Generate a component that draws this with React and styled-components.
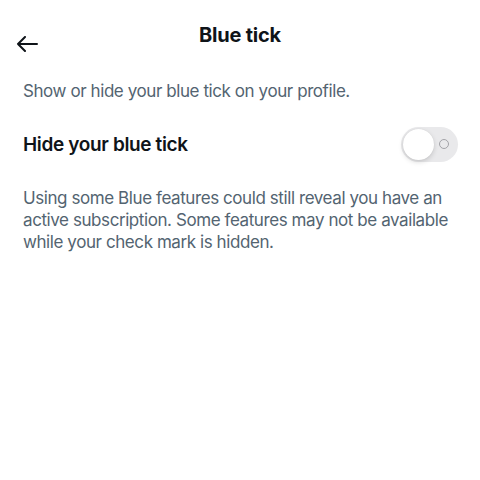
import React, { useState } from "react";
import styled, { createGlobalStyle } from "styled-components";

const GlobalStyle = createGlobalStyle`
  html, body {
    margin: 0;
    padding: 0;
    background: #ffffff;
  }
  body {
    font-family: Inter, "Liberation Sans", Arial, sans-serif;
    -webkit-font-smoothing: antialiased;
  }
`;

const Page = styled.div`
  width: 480px;
  height: 480px;
  background: #ffffff;
  color: #0f1419;
`;

const Header = styled.div`
  display: grid;
  grid-template-columns: 60px 1fr 60px;
  align-items: center;
  height: 55px;
  padding-top: 15px;
  box-sizing: border-box;
`;

const BackButton = styled.button`
  border: none;
  background: none;
  padding: 0 0 0 16px;
  display: flex;
  align-items: center;
  cursor: pointer;
  height: 20px;
  margin-top: 18px;
`;

const Title = styled.h1`
  margin: 0;
  text-align: center;
  font-size: 20px;
  font-weight: 700;
  letter-spacing: -0.2px;
  color: #0f1419;
`;

const Content = styled.div`
  padding: 0 23px;
`;

const Lead = styled.p`
  margin: 25px 0 0;
  font-size: 17px;
  line-height: 22px;
  color: #536471;
  letter-spacing: -0.42px;
`;

const SettingRow = styled.div`
  display: flex;
  align-items: center;
  justify-content: space-between;
  margin-top: 25px;
  margin-right: -1px;
`;

const SettingLabel = styled.span`
  font-size: 19px;
  font-weight: 600;
  letter-spacing: -0.35px;
  color: #0f1419;
`;

const Track = styled.button`
  position: relative;
  width: 57px;
  height: 35px;
  border-radius: 18px;
  border: none;
  padding: 0;
  background: ${(p) => (p.on ? "#1d9bf0" : "#e9e9eb")};
  cursor: pointer;
`;

const Knob = styled.span`
  position: absolute;
  top: 2px;
  left: ${(p) => (p.on ? "24px" : "2px")};
  width: 31px;
  height: 31px;
  border-radius: 50%;
  background: #ffffff;
  box-shadow: 0 2px 5px rgba(0, 0, 0, 0.15), 0 0 1px rgba(0, 0, 0, 0.1);
`;

const OffMark = styled.span`
  position: absolute;
  top: 12px;
  right: 9px;
  width: 8px;
  height: 8px;
  border-radius: 50%;
  border: 1.3px solid #a3a3a8;
`;

const Note = styled.p`
  margin: 25px 0 0;
  font-size: 17px;
  line-height: 22px;
  color: #536471;
  letter-spacing: -0.42px;
`;

const ArrowIcon = () => (
  <svg width="22" height="16" viewBox="0 0 22 16" fill="none">
    <path
      d="M21 8H2M9 1L2 8l7 7"
      stroke="#0f1419"
      strokeWidth="2"
      strokeLinecap="round"
      strokeLinejoin="round"
    />
  </svg>
);

export default function App() {
  const [hidden, setHidden] = useState(false);

  return (
    <Page>
      <GlobalStyle />
      <Header>
        <BackButton aria-label="Back">
          <ArrowIcon />
        </BackButton>
        <Title>Blue tick</Title>
        <span />
      </Header>
      <Content>
        <Lead>Show or hide your blue tick on your profile.</Lead>
        <SettingRow>
          <SettingLabel>Hide your blue tick</SettingLabel>
          <Track on={hidden} onClick={() => setHidden(!hidden)}>
            {!hidden && <OffMark />}
            <Knob on={hidden} />
          </Track>
        </SettingRow>
        <Note>
          Using some Blue features could still reveal you have an active
          subscription. Some features may not be available while your check
          mark is hidden.
        </Note>
      </Content>
    </Page>
  );
}
